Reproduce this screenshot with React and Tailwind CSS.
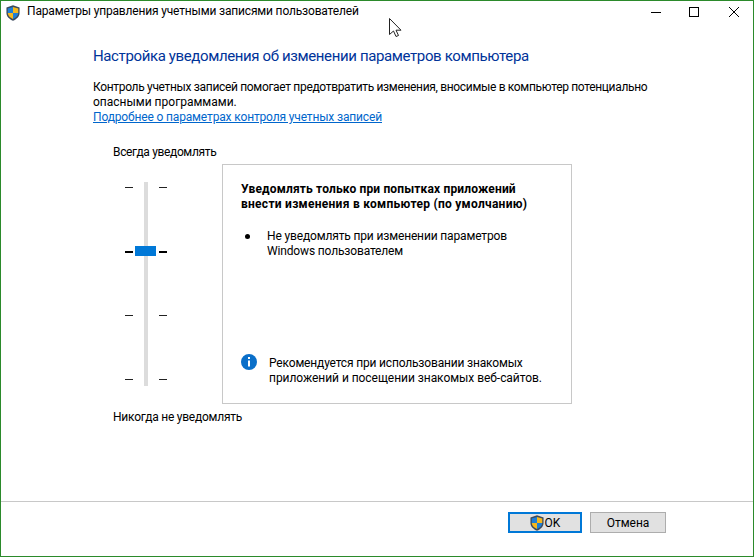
function Shield({ className }) {
  return (
    <svg viewBox="0 0 16 16" preserveAspectRatio="none" className={className}>
      <path d="M8 .3 L15.5 2.5 V8 C15.5 11.5 12 14.4 8 15.7 C4 14.4 .5 11.5 .5 8 V2.5 Z" fill="#3b4a5c" />
      <path d="M8 2 L14 3.5 V8 H8 Z" fill="#f5b81e" />
      <path d="M8 2 L2 3.5 V8 H8 Z" fill="#1f7fd6" />
      <path d="M2 8 H8 V14 C5 13 2.2 11 2 8 Z" fill="#f5b81e" />
      <path d="M14 8 H8 V14 C11 13 13.8 11 14 8 Z" fill="#1f7fd6" />
    </svg>
  );
}
function Tick({ active }) {
  return <div className={active ? "h-[2px] w-[8px] bg-black" : "h-px w-[8px] bg-[#222222]"} />;
}
function Ticks() {
  return (
    <div className="flex h-[193px] flex-col justify-between">
      <Tick /><Tick active /><Tick /><Tick />
    </div>
  );
}
export default function App() {
  return (
    <div className="relative flex h-[557px] w-[754px] flex-col border border-[#2b8a2b] bg-white font-['Roboto','Noto_Sans',sans-serif] text-[12px] leading-[15px] text-black">
      <div className="flex h-[21px] items-center justify-between">
        <div className="flex items-center gap-[7px] pl-[5px]">
          <Shield className="mt-[2px] h-[16px] w-[14px]" />
          <span className="tracking-[-0.17px]">Параметры управления учетными записями пользователей</span>
        </div>
        <div className="flex items-center pr-[14px]">
          <svg width="10" height="10" viewBox="0 0 10 10"><path d="M0 5.5H10" stroke="#000" /></svg>
          <svg width="10" height="10" viewBox="0 0 10 10" className="ml-[28px]"><rect x=".5" y=".5" width="9" height="9" fill="none" stroke="#000" /></svg>
          <svg width="10" height="10" viewBox="0 0 10 10" className="ml-[30px]"><path d="M0 0L10 10M10 0L0 10" stroke="#000" /></svg>
        </div>
      </div>
      <div className="flex flex-1 flex-col pl-[92px] pt-[24px]">
        <h1 className="text-[15px] leading-[21px] tracking-[-0.375px] text-[#003399]">Настройка уведомления об изменении параметров компьютера</h1>
        <p className="mt-[13px]"><span className="tracking-[-0.33px]">Контроль учетных записей помогает предотвратить изменения, вносимые в компьютер потенциально</span><br />опасными программами.</p>
        <a className="tracking-[-0.15px] text-[#0066cc] underline">Подробнее о параметрах контроля учетных записей</a>
        <div className="mt-[6px] flex">
          <div className="flex w-[129px] flex-col">
            <div className="mt-[14px] pl-[20px] whitespace-nowrap tracking-[-0.35px]">Всегда уведомлять</div>
            <div className="mt-[22px] flex pl-[32px]">
              <div className="pt-[5px]"><Ticks /></div>
              <div className="relative mx-[11px] h-[204px] w-[4px] bg-[#dcdcdc]">
                <div className="absolute left-[-9px] top-[64px] h-[10px] w-[21px] bg-[#0078d7]" />
              </div>
              <div className="pt-[5px]"><Ticks /></div>
            </div>
            <div className="mt-[24px] pl-[20px] whitespace-nowrap tracking-[-0.24px]">Никогда не уведомлять</div>
          </div>
          <div className="mt-[33px] flex h-[240px] w-[350px] flex-col border border-[#c8c8c8] pl-[18px] pt-[17px]">
            <div className="font-bold">
              <span className="tracking-[0.15px]">Уведомлять только при попытках приложений</span><br />
              <span className="tracking-[0.27px]">внести изменения в компьютер (по умолчанию)</span>
            </div>
            <div className="mt-[17px] flex">
              <div className="mt-[5px] ml-[4px] h-[5px] w-[5px] rounded-full bg-black" />
              <div className="ml-[17px] tracking-[-0.15px]">Не уведомлять при изменении параметров<br />Windows пользователем</div>
            </div>
            <div className="mt-auto mb-[17px] flex">
              <svg width="16" height="16" viewBox="0 0 16 16" className="mt-[-2px] shrink-0">
                <circle cx="8" cy="8" r="8" fill="#0a6fc9" />
                <rect x="7" y="3" width="2" height="2" fill="#fff" />
                <rect x="7" y="6.5" width="2" height="6" fill="#fff" />
              </svg>
              <div className="ml-[12px]">
                <span className="tracking-[-0.17px]">Рекомендуется при использовании знакомых</span><br />
                <span className="tracking-[-0.05px]">приложений и посещении знакомых веб-сайтов.</span>
              </div>
            </div>
          </div>
        </div>
      </div>
      <div className="flex h-[55px] justify-end gap-[8px] border-t border-[#c8c8c8] pr-[87px] pt-[10px]">
        <button className="flex h-[21px] w-[74px] items-center justify-center border-2 border-[#0078d7] bg-[#e1e1e1]">
          <Shield className="h-[16px] w-[14px]" />
          <span className="ml-[1px] pt-[1px]">OK</span>
        </button>
        <button className="h-[21px] w-[76px] border border-[#adadad] bg-[#e1e1e1] pt-[1px]">Отмена</button>
      </div>
      <svg width="13" height="20" viewBox="0 0 13 20" className="absolute left-[388px] top-[17px]">
        <path d="M.5.5V16.5L4.5 13L7 18.5L9.5 17.5L7 12.2H12Z" fill="#fff" stroke="#222" />
      </svg>
    </div>
  );
}
